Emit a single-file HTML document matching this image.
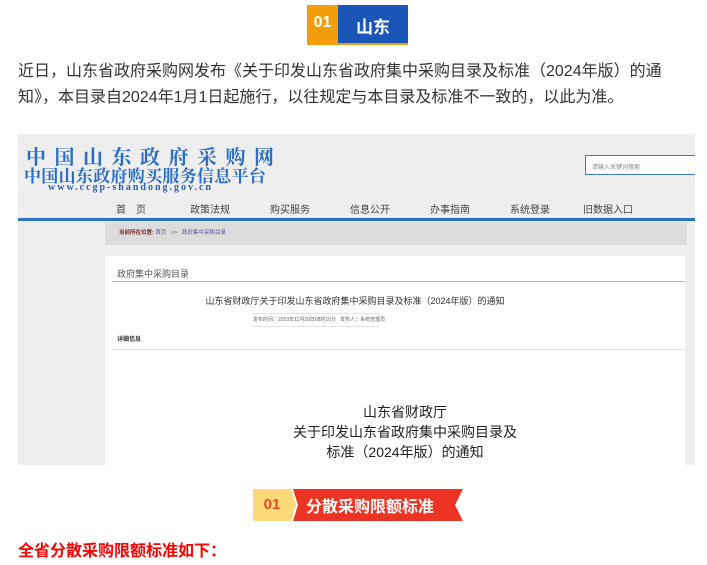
<!DOCTYPE html>
<html><head><meta charset="utf-8"><style>
body{margin:0;width:707px;height:565px;background:#fff;position:relative;overflow:hidden;font-family:"Liberation Sans","Noto Sans CJK SC",sans-serif;}
.a{position:absolute;white-space:nowrap}
</style></head><body>
<div class="a" style="left:307px;top:5px;width:31px;height:39px;background:#f59c0b"></div>
<div class="a" style="left:338px;top:5px;width:70px;height:38px;background:#1a55b8"></div>
<div class="a" style="left:307px;top:43px;width:101px;height:2px;background:#f59c0b"></div>
<div class="a" style="left:307px;top:14px;width:31px;text-align:center;font-size:16px;line-height:18px;font-weight:bold;color:#fff">01</div>
<div class="a" style="left:356px;top:13px;font-size:17px;font-weight:bold;color:#fff">山东</div>
<div class="a" style="left:18px;top:59px;font-size:16px;line-height:26px;color:#333;width:690px;white-space:normal">近日，山东省政府采购网发布《关于印发山东省政府集中采购目录及标准（2024年版）的通<br>知》，本目录自2024年1月1日起施行，以往规定与本目录及标准不一致的，以此为准。</div>

<div class="a" style="left:18px;top:134px;width:677px;height:331px;background:#eeeeee;overflow:hidden">
 <div class="a" style="left:8px;top:12px;font-family:'Noto Serif CJK SC',serif;font-weight:bold;font-size:20px;letter-spacing:8.5px;color:#2a6fc7;line-height:20px">中国山东政府采购网</div>
 <div class="a" style="left:6px;top:32px;font-family:'Noto Serif CJK SC',serif;font-weight:bold;font-size:17px;letter-spacing:0.3px;color:#2a6fc7;line-height:17px">中国山东政府购买服务信息平台</div>
 <div class="a" style="left:30px;top:48px;font-family:'Liberation Serif',serif;font-weight:bold;font-size:10px;letter-spacing:2px;color:#2a5fae">www.ccgp-shandong.gov.cn</div>
 <div class="a" style="left:567px;top:21px;width:112px;height:20px;background:#fff;border:1px solid #3a7ad0;box-sizing:border-box;font-size:6px;color:#888;padding:6px 0 0 6px">请输入关键词搜索</div>
 <div class="a" style="left:0;top:67px;font-size:10px;color:#444">
  <span class="a" style="left:98px">首　页</span><span class="a" style="left:172px">政策法规</span><span class="a" style="left:252px">购买服务</span><span class="a" style="left:332px">信息公开</span><span class="a" style="left:412px">办事指南</span><span class="a" style="left:492px">系统登录</span><span class="a" style="left:565px">旧数据入口</span></div>
 <div class="a" style="left:0;top:84px;width:677px;height:3px;background:#2a70c8"></div>
 <div class="a" style="left:87px;top:88px;width:582px;height:23px;background:#dcdcdc"></div>
 <div class="a" style="left:101px;top:94px;font-size:5.5px;color:#7a2a2a;font-weight:bold">当前所在位置: <span style="color:#6a4a9a;font-weight:normal">首页 &nbsp; &gt;&gt; &nbsp; 政府集中采购目录</span></div>
 <div class="a" style="left:87px;top:122px;width:580px;height:209px;background:#fff"></div>
 <div class="a" style="left:99px;top:133px;font-size:9px;color:#555">政府集中采购目录</div>
 <div class="a" style="left:94px;top:147px;width:573px;height:1px;background:#a9c2dc"></div>
 <div class="a" style="left:87px;top:160px;width:500px;text-align:center;font-size:9px;color:#333">山东省财政厅关于印发山东省政府集中采购目录及标准（2024年版）的通知</div>
 <div class="a" style="left:235px;top:179px;width:126px;height:12px;border-top:1px solid #e4e4e4;border-bottom:1px solid #e4e4e4;font-size:5px;color:#666;text-align:center;line-height:12px">发布时间：2023年11月20日08时10分 &nbsp; 发布人：系统管理员</div>
 <div class="a" style="left:99px;top:200px;font-size:6px;font-weight:bold;color:#333">详细信息</div>
 <div class="a" style="left:94px;top:215px;width:573px;height:1px;background:#e4e4e4"></div>
 <div class="a" style="left:187px;top:268px;width:400px;text-align:center;font-size:14px;line-height:20px;color:#222;white-space:normal">山东省财政厅<br>关于印发山东省政府集中采购目录及<br>标准（2024年版）的通知</div>
</div>

<svg class="a" style="left:253px;top:489px" width="210" height="32">
 <polygon points="0,0 38,0 43,16 38,32 0,32" fill="#fdd978"/>
 <polygon points="43,0 213,0 205,16 213,32 43,32 48,16" fill="#ec3424" transform="translate(-3,0)"/>
</svg>
<div class="a" style="left:253px;top:496px;width:38px;text-align:center;font-size:15px;line-height:17px;font-weight:bold;color:#e8452c">01</div>
<div class="a" style="left:306px;top:493px;font-size:16px;font-weight:bold;color:#fff">分散采购限额标准</div>
<div class="a" style="left:18px;top:537px;font-size:16px;font-weight:bold;color:#f00">全省分散采购限额标准如下：</div>
</body></html>
